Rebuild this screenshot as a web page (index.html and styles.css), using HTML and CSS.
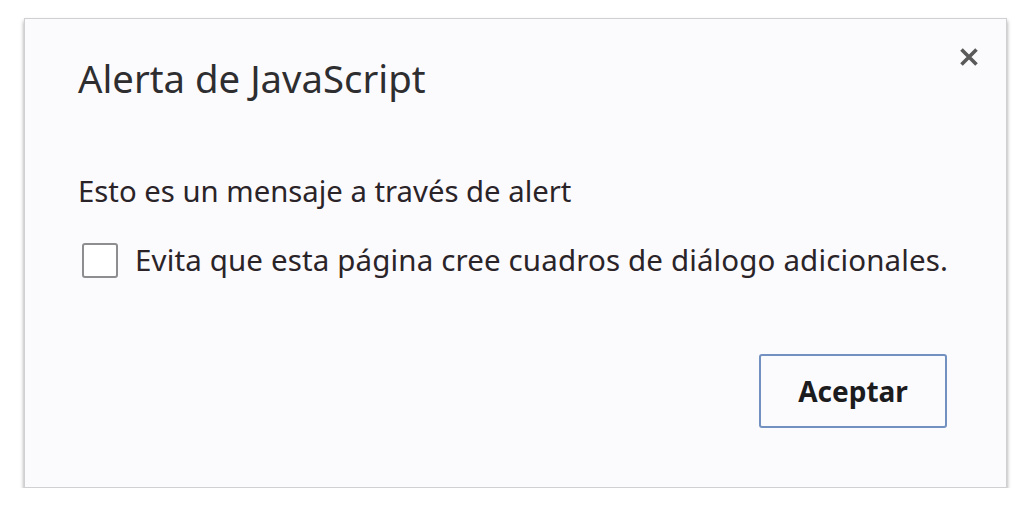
FILE: index.html
```html
<!DOCTYPE html>
<html lang="es">
<head>
<meta charset="utf-8">
<link rel="stylesheet" href="styles.css">
</head>
<body>
<div class="dialog">
  <div class="head">
    <h1 class="title">Alerta de JavaScript</h1>
    <button class="close" aria-label="Cerrar">
      <svg width="22" height="20" viewBox="0 0 22 20"><path d="M3.5 2.5 L18.5 17.5 M18.5 2.5 L3.5 17.5" stroke="#5a5a5a" stroke-width="3.6" stroke-linecap="butt"/></svg>
    </button>
  </div>
  <p class="message">Esto es un mensaje a través de alert</p>
  <label class="check"><span class="box"></span><span class="label">Evita que esta página cree cuadros de diálogo adicionales.</span></label>
  <div class="actions"><button class="ok">Aceptar</button></div>
</div>
</body>
</html>
```
FILE: styles.css
```css
html, body { margin: 0; padding: 0; background: #ffffff; }
body { padding: 18px 0 0 24px; font-family: "Noto Sans", "Open Sans", sans-serif; color: #222; }
.dialog {
  box-sizing: border-box;
  width: 983px;
  height: 470px;
  background: #fbfafc;
  border: 1px solid #d0d0d3;
  box-shadow: 0 3px 4px rgba(0,0,0,0.4);
  padding: 0 0 0 53px;
  display: flex;
  flex-direction: column;
}
.head { display: flex; justify-content: space-between; align-items: flex-start; padding-top: 28px; }
.title { margin: 9px 0 0 0; font-weight: 400; font-size: 38.3px; line-height: 44px; color: #2e2e30; }
.close { background: none; border: 0; padding: 0; margin: 0 26px 0 0; width: 22px; height: 20px; cursor: pointer; }
.close svg { display: block; }
.message { margin: 73px 0 0 0; font-size: 29.3px; line-height: 36px; color: #2a2429; }
.check { display: flex; align-items: center; margin-top: 33px; font-size: 29.5px; line-height: 36px; color: #2a2429; }
.label { letter-spacing: 0.14px; }
.box { width: 36px; height: 35px; box-sizing: border-box; border: 2px solid #8e8e90; border-radius: 3px; background: #fff; margin: 0 17px 0 4px; flex: none; }
.actions { display: flex; justify-content: flex-end; margin-top: 76px; padding-right: 59px; }
.ok {
  width: 188px; height: 74px;
  box-sizing: border-box;
  border: 2px solid #7290c0;
  border-radius: 3px;
  background: #fbfbfd;
  font-family: inherit;
  font-size: 28px;
  font-weight: 700;
  color: #1c1c1e;
  padding: 0;
}
```
